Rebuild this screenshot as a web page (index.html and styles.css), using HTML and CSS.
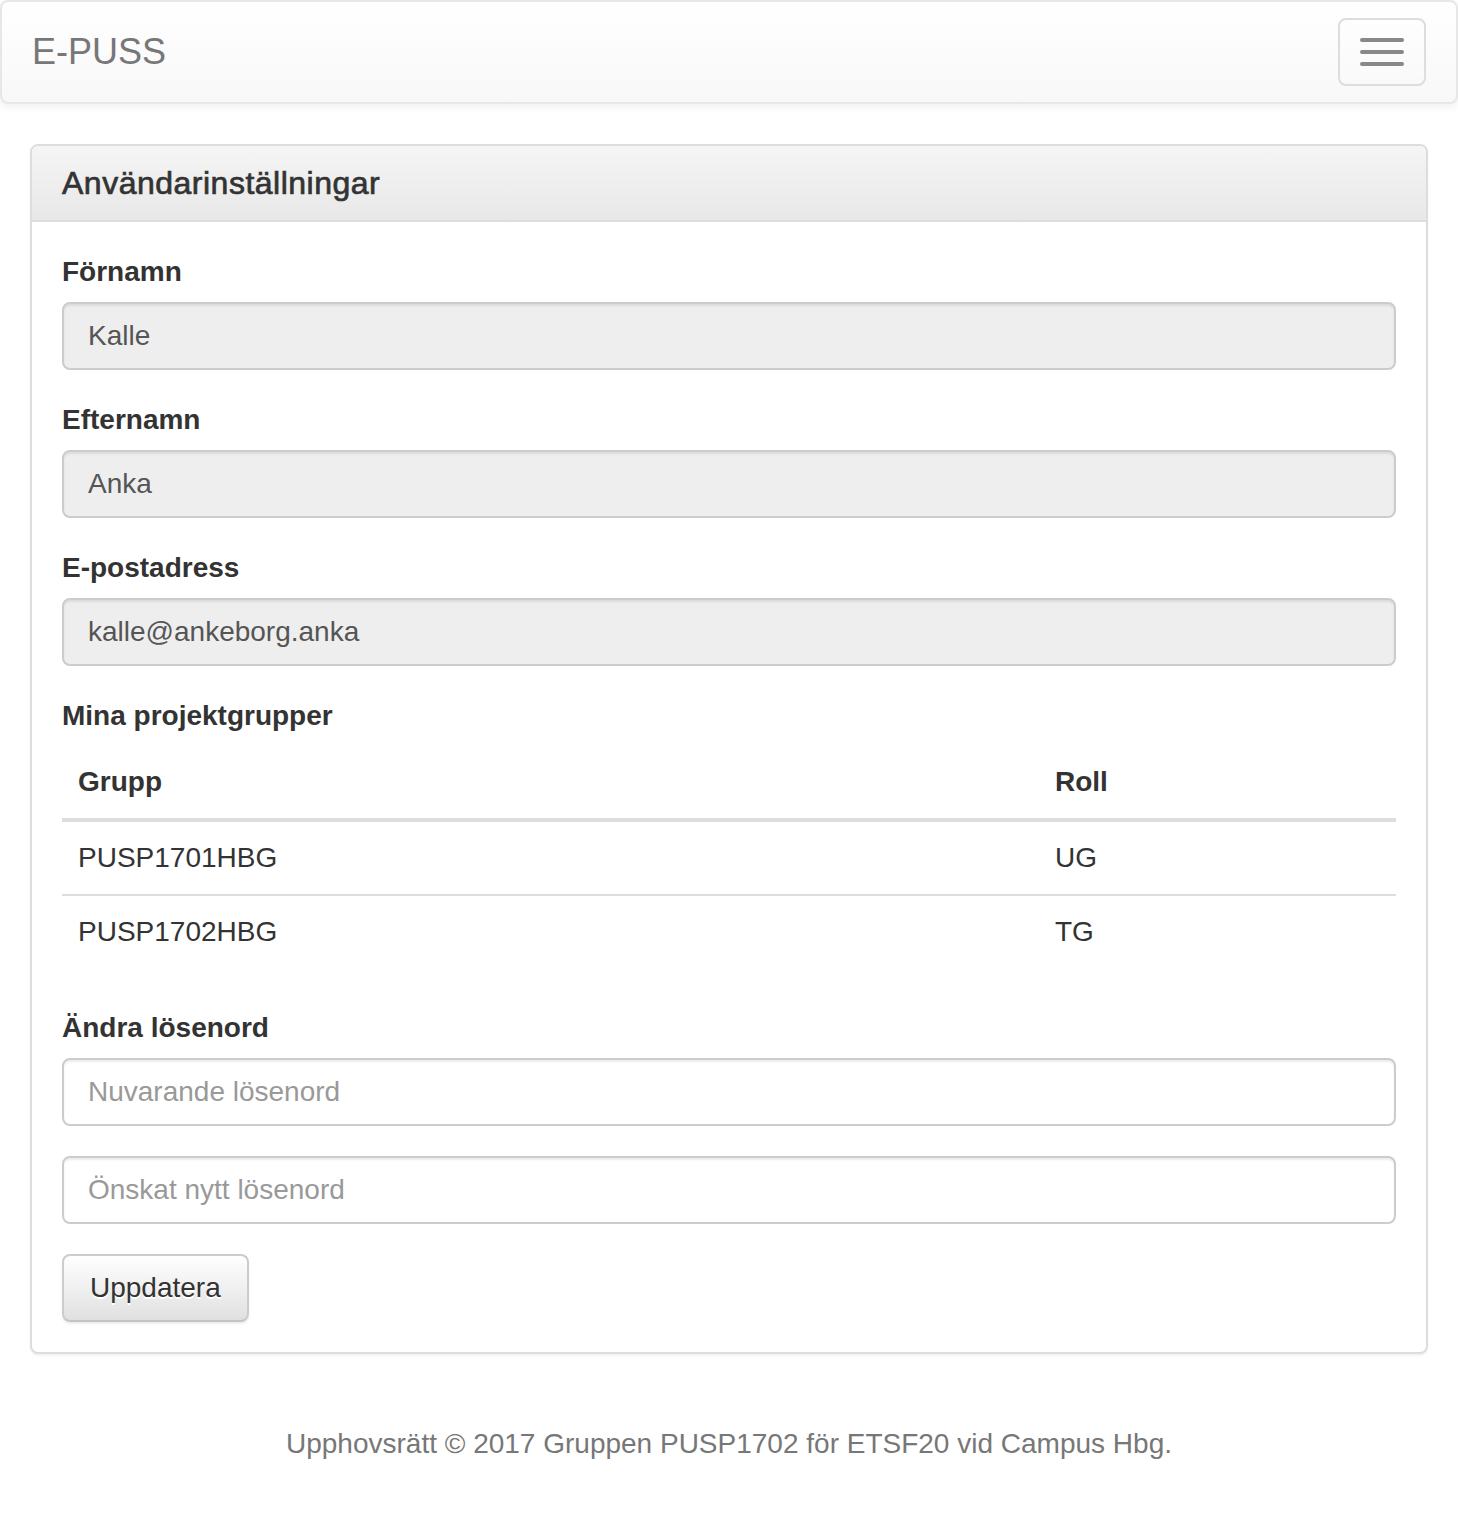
FILE: index.html
```html
<!DOCTYPE html>
<html lang="sv">
<head>
<meta charset="utf-8">
<title>E-PUSS</title>
<link rel="stylesheet" href="styles.css">
</head>
<body>
<nav class="navbar">
  <span class="brand">E-PUSS</span>
  <button class="toggle" type="button" aria-label="Meny">
    <span class="bar"></span><span class="bar"></span><span class="bar"></span>
  </button>
</nav>
<main class="container">
  <section class="panel">
    <div class="panel-heading"><h3 class="panel-title">Användarinställningar</h3></div>
    <div class="panel-body">
      <div class="form-group">
        <label class="label">Förnamn</label>
        <input class="input" type="text" value="Kalle" readonly>
      </div>
      <div class="form-group">
        <label class="label">Efternamn</label>
        <input class="input" type="text" value="Anka" readonly>
      </div>
      <div class="form-group">
        <label class="label">E-postadress</label>
        <input class="input" type="text" value="kalle@ankeborg.anka" readonly>
      </div>
      <label class="label">Mina projektgrupper</label>
      <table class="table">
        <thead>
          <tr><th class="col-group">Grupp</th><th>Roll</th></tr>
        </thead>
        <tbody>
          <tr><td>PUSP1701HBG</td><td>UG</td></tr>
          <tr><td>PUSP1702HBG</td><td>TG</td></tr>
        </tbody>
      </table>
      <div class="form-group">
        <label class="label">Ändra lösenord</label>
        <input class="input editable" type="password" placeholder="Nuvarande lösenord">
      </div>
      <div class="form-group">
        <input class="input editable" type="password" placeholder="Önskat nytt lösenord">
      </div>
      <button class="btn" type="button">Uppdatera</button>
    </div>
  </section>
</main>
<footer class="footer">Upphovsrätt © 2017 Gruppen PUSP1702 för ETSF20 vid Campus Hbg.</footer>
</body>
</html>
```
FILE: styles.css
```css
* { box-sizing: border-box; }
html, body { margin: 0; padding: 0; }
body {
  font-family: "Liberation Sans", Arial, sans-serif;
  font-size: 28px;
  line-height: 40px;
  color: #333;
  background: #fff;
}
.navbar {
  display: flex;
  justify-content: space-between;
  align-items: flex-start;
  height: 104px;
  margin: 0 0 40px;
  border: 2px solid #e7e7e7;
  border-radius: 8px;
  background: linear-gradient(to bottom, #fff 0%, #f8f8f8 100%);
  box-shadow: inset 0 2px 0 rgba(255,255,255,.15), 0 2px 10px rgba(0,0,0,.075);
}
.brand {
  font-size: 36px;
  line-height: 40px;
  padding: 30px;
  height: 100px;
  color: #777;
}
.toggle {
  margin: 16px 30px 0 0;
  padding: 18px 20px;
  width: 88px;
  height: 68px;
  border: 2px solid #ddd;
  border-radius: 8px;
  background: transparent;
  display: flex;
  flex-direction: column;
  gap: 8px;
  justify-content: center;
  align-items: center;
}
.bar {
  display: block;
  width: 44px;
  height: 4px;
  border-radius: 2px;
  background: #888;
}
.container { padding: 0 30px; }
.panel {
  border: 2px solid #ddd;
  border-radius: 8px;
  background: #fff;
  box-shadow: 0 2px 2px rgba(0,0,0,.05);
  margin-bottom: 40px;
}
.panel-heading {
  padding: 20px 30px;
  border-bottom: 2px solid #ddd;
  border-radius: 6px 6px 0 0;
  background: linear-gradient(to bottom, #f5f5f5 0%, #e8e8e8 100%);
}
.panel-title {
  margin: 0;
  font-size: 32px;
  line-height: 34px;
  font-weight: 400;
  letter-spacing: 0.5px;
  -webkit-text-stroke: 0.7px #333;
  color: #333;
}
.panel-body { padding: 30px; }
.form-group { margin-bottom: 30px; }
.label {
  display: block;
  font-weight: bold;
  margin-bottom: 10px;
  line-height: 40px;
}
.input {
  display: block;
  width: 100%;
  height: 68px;
  padding: 12px 24px;
  font: inherit;
  font-size: 28px;
  line-height: 40px;
  color: #555;
  background: #eee;
  border: 2px solid #ccc;
  border-radius: 8px;
  box-shadow: inset 0 2px 2px rgba(0,0,0,.075);
  outline: none;
}
.input.editable { background: #fff; }
.input::placeholder { color: #999; opacity: 1; }
.table {
  width: 100%;
  border-collapse: collapse;
  border-spacing: 0;
  margin-bottom: 40px;
}
.table th, .table td {
  padding: 16px;
  line-height: 40px;
  text-align: left;
  vertical-align: top;
}
.table th {
  font-weight: bold;
  border-bottom: 4px solid #ddd;
}
.table td { border-top: 2px solid #ddd; }
.table tbody tr:first-child td { border-top: 0; }
.col-group { width: 977px; }
.btn {
  display: inline-block;
  padding: 12px 26px;
  height: 68px;
  font: inherit;
  font-size: 28px;
  line-height: 40px;
  color: #333;
  text-shadow: 0 2px 0 #fff;
  background: linear-gradient(to bottom, #fff 0%, #e0e0e0 100%);
  border: 2px solid #ccc;
  border-color: #ccc #ccc #c4c4c4;
  border-radius: 8px;
  box-shadow: inset 0 2px 0 rgba(255,255,255,.15), 0 2px 2px rgba(0,0,0,.075);
}
.footer {
  text-align: center;
  color: #777;
  padding-top: 30px;
  line-height: 40px;
}
```
